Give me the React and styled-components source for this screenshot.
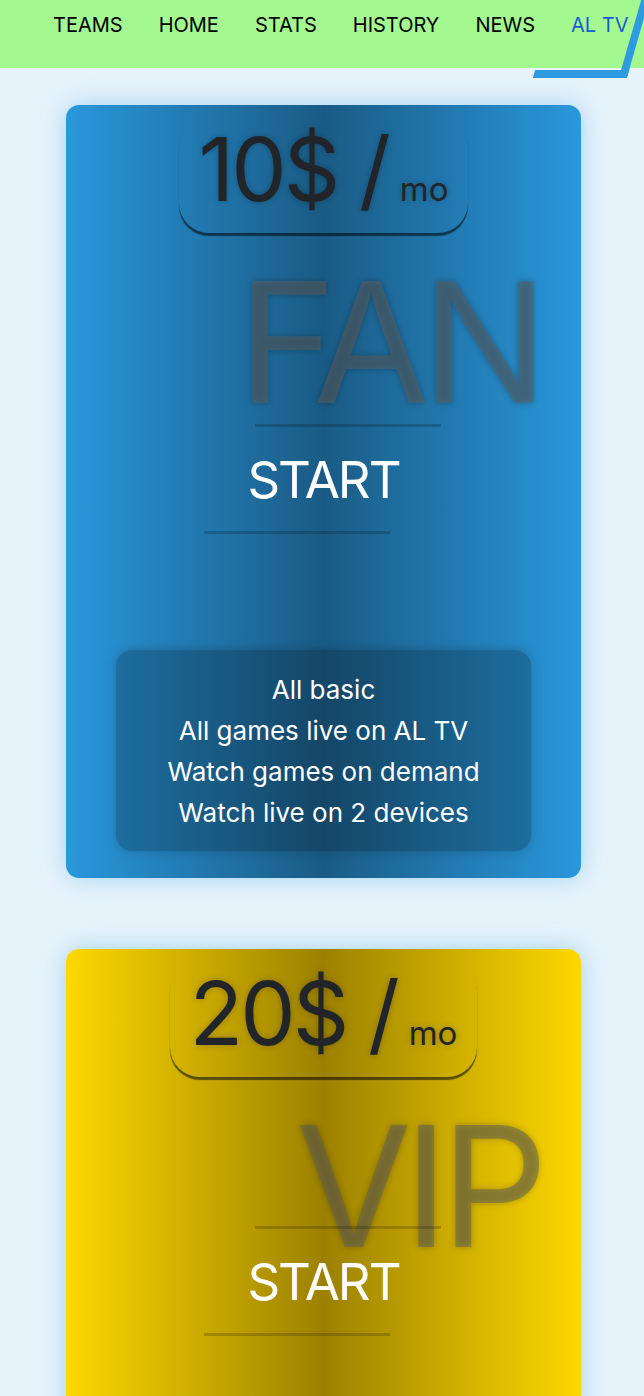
import React from 'react';
import styled, { createGlobalStyle } from 'styled-components';

const GlobalStyle = createGlobalStyle`
    body {
        margin: 0;
        background: #e7f3fb;
        font-family: "Inter", "Noto Sans", sans-serif;
        color: #212529;
    }
`;

const Header = styled.header`
    position: relative;
    overflow-x: clip;
    z-index: 2;
`;

const NavBar = styled.nav`
    position: relative;
    height: 68px;
    background: #a4f890;
    display: flex;
    align-items: flex-start;
    gap: 36px;
    padding: 13px 0 0 53px;
    box-sizing: border-box;
`;

const NavLink = styled.a`
    font-size: 20px;
    line-height: 24px;
    color: ${(p) => (p.$active ? '#1a5cd0' : '#000')};
    text-decoration: none;
    white-space: nowrap;
`;

const ActiveMark = styled.span`
    position: absolute;
    top: 0;
    left: 544px;
    width: 94px;
    height: 78px;
    box-sizing: border-box;
    border-right: 8px solid #2e9be0;
    border-bottom: 8px solid #2e9be0;
    transform: skewX(-16deg);
`;

const Plans = styled.main`
    display: flex;
    flex-direction: column;
    align-items: center;
    gap: 71px;
    padding: 37px 0 40px 3px;
`;

const Card = styled.section`
    width: 515px;
    border-radius: 13px;
    display: flex;
    flex-direction: column;
    align-items: center;
    padding: 11px 0 27px;
    box-sizing: border-box;
    background: linear-gradient(90deg, ${(p) => p.$edge} 0%, ${(p) => p.$mid} 50%, ${(p) => p.$edge} 100%);
    box-shadow: 0 0 24px ${(p) => p.$glow};
`;

const Price = styled.div`
    display: inline-block;
    padding: 0 20px 11px;
    border-radius: 30px;
    box-shadow: 0 3px 1px rgba(0, 0, 0, 0.55);
    font-size: 88px;
    line-height: 106px;
    letter-spacing: -3px;
    white-space: pre;
    text-shadow: 0 0 6px rgba(0, 0, 0, 0.25);
`;

const Per = styled.span`
    font-size: 33px;
    line-height: 1;
    letter-spacing: 0;
    margin-left: 12px;
`;

const BigWord = styled.div`
    align-self: stretch;
    text-align: right;
    padding-right: 41px;
    margin-top: 25px;
    margin-bottom: ${(p) => p.$lift}px;
    font-size: 168px;
    line-height: 1;
    letter-spacing: -8px;
    color: rgba(95, 95, 95, 0.5);
    text-shadow: 0 0 6px rgba(0, 0, 0, 0.25);
`;

const Rule = styled.hr`
    width: 186px;
    height: 3px;
    margin: ${(p) => p.$top}px 0 0;
    border: 0;
    background: rgba(0, 0, 0, 0.18);
    transform: translateX(${(p) => p.$shift}px);
`;

const StartButton = styled.button`
    margin-top: 23px;
    padding: 0;
    border: 0;
    background: none;
    color: #fff;
    font-family: inherit;
    font-size: 51px;
    line-height: 60px;
    letter-spacing: -2px;
    cursor: pointer;
`;

const Features = styled.ul`
    width: 415px;
    list-style: none;
    margin: 116px 0 0;
    padding: 19px 0 18px;
    border-radius: 16px;
    background: rgba(0, 0, 0, 0.22);
    box-shadow: 0 0 12px rgba(0, 0, 0, 0.2);
    color: #fff;
    text-align: center;
    font-size: 26px;
    line-height: 41px;
`;

const plans = [
    {
        price: '10$',
        name: 'FAN',
        edge: '#2998dc',
        mid: '#1a5b85',
        glow: 'rgba(60, 160, 225, 0.4)',
        lift: 0,
        features: ['All basic', 'All games live on AL TV', 'Watch games on demand', 'Watch live on 2 devices'],
    },
    {
        price: '20$',
        name: 'VIP',
        edge: '#fdd800',
        mid: '#9c8100',
        glow: 'rgba(60, 160, 225, 0.4)',
        lift: -42,
        features: ['All FAN', 'Exclusive interviews', 'Ad-free streams', 'Watch live on 5 devices'],
    },
];

const links = ['TEAMS', 'HOME', 'STATS', 'HISTORY', 'NEWS', 'AL TV'];

const App = () => {
    return (
        <>
            <GlobalStyle />
            <Header>
                <NavBar>
                    {links.map((l) => (
                        <NavLink key={l} href="#" $active={l === 'AL TV'}>{l}</NavLink>
                    ))}
                    <ActiveMark />
                </NavBar>
            </Header>
            <Plans>
                {plans.map((p) => (
                    <Card key={p.name} $edge={p.edge} $mid={p.mid} $glow={p.glow}>
                        <Price>{p.price} /<Per>mo</Per></Price>
                        <BigWord $lift={p.lift}>{p.name}</BigWord>
                        <Rule $top={-2} $shift={24} />
                        <StartButton>START</StartButton>
                        <Rule $top={21} $shift={-27} />
                        <Features>
                            {p.features.map((f) => (
                                <li key={f}>{f}</li>
                            ))}
                        </Features>
                    </Card>
                ))}
            </Plans>
        </>
    );
};

export default App;
